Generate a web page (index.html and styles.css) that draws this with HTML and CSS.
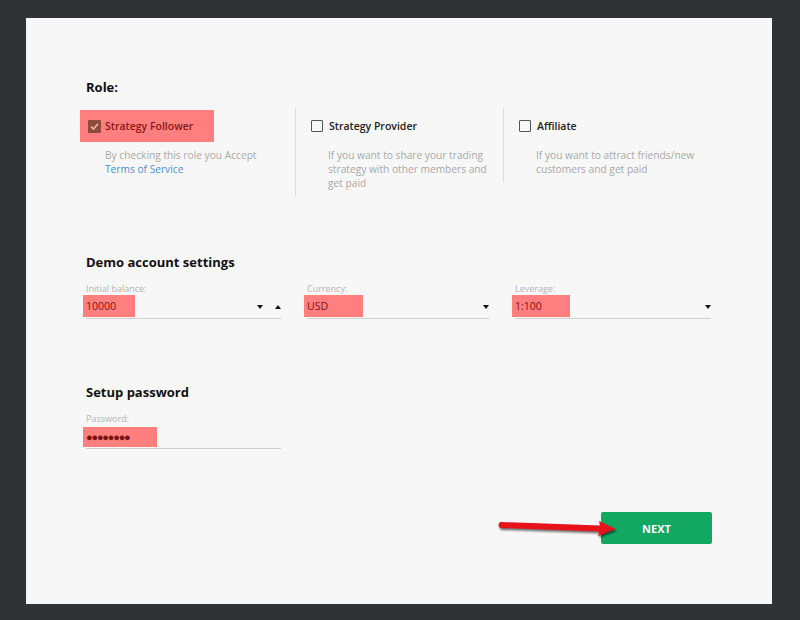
FILE: index.html
```html
<!DOCTYPE html>
<html>
    <head>
        <title>Account Setup</title>
        <link rel="stylesheet" href="styles.css">
    </head>
    <body>
        <div class="card">
            <section class="role-section">
                <h2>Role:</h2>
                <div class="roles">
                    <div class="role-col">
                        <div class="role-option marked">
                            <span class="checkbox checked">
                                <svg width="13" height="13" viewBox="0 0 13 13"><path d="M3 6.5 L5.5 9 L10 3.8" fill="none" stroke="#f6b3aa" stroke-width="1.6"/></svg>
                            </span>
                            <span class="role-name">Strategy Follower</span>
                        </div>
                        <p class="role-desc">By checking this role you Accept<br><a href="#">Terms of Service</a></p>
                    </div>
                    <div class="role-col divided">
                        <div class="role-option">
                            <span class="checkbox"></span>
                            <span class="role-name">Strategy Provider</span>
                        </div>
                        <p class="role-desc">If you want to share your trading<br>strategy with other members and<br>get paid</p>
                    </div>
                    <div class="role-col divided">
                        <div class="role-option">
                            <span class="checkbox"></span>
                            <span class="role-name">Affiliate</span>
                        </div>
                        <p class="role-desc">If you want to attract friends/new<br>customers and get paid</p>
                    </div>
                </div>
            </section>

            <section class="demo-section">
                <h2>Demo account settings</h2>
                <div class="fields">
                    <div class="field">
                        <label>Initial balance:</label>
                        <div class="field-box">
                            <span class="value marked w-balance">10000</span>
                            <span class="arrows"><i class="down"></i><i class="up"></i></span>
                        </div>
                    </div>
                    <div class="field">
                        <label>Currency:</label>
                        <div class="field-box">
                            <span class="value marked w-currency">USD</span>
                            <span class="arrows"><i class="down"></i></span>
                        </div>
                    </div>
                    <div class="field">
                        <label>Leverage:</label>
                        <div class="field-box">
                            <span class="value marked w-leverage">1:100</span>
                            <span class="arrows"><i class="down"></i></span>
                        </div>
                    </div>
                </div>
            </section>

            <section class="password-section">
                <h2>Setup password</h2>
                <div class="field password-field">
                    <label>Password:</label>
                    <div class="field-box">
                        <span class="value marked w-password dots">&#9679;&#9679;&#9679;&#9679;&#9679;&#9679;&#9679;&#9679;</span>
                    </div>
                </div>
            </section>

            <div class="actions">
                <button class="next-btn">NEXT</button>
                <svg class="pointer" width="130" height="30" viewBox="0 0 130 30">
                    <path d="M4 7 L104 10.5 L103 6 L120 14 L102 21 L103 16.5 L4 13 Q1 10 4 7 Z" fill="#e8121a"/>
                </svg>
            </div>
        </div>
    </body>
</html>
```

FILE: styles.css
```css
html, body {
    margin: 0;
    background-color: #2f3336;
}
body {
    padding: 18px 26px;
    height: 620px;
    box-sizing: border-box;
    font-family: "Open Sans", "Noto Sans", sans-serif;
}
.card {
    position: relative;
    width: 746px;
    height: 586px;
    box-sizing: border-box;
    background-color: #f7f7f7;
    padding: 60px 60px 0 60px;
}
h2 {
    margin: 0;
    font-size: 13px;
    line-height: 18px;
    font-weight: bold;
    color: #111;
}

/* roles */
.roles {
    display: grid;
    grid-template-columns: 215px 208px 1fr;
    align-items: start;
    margin: 12px 0 0 -6px;
}
.role-col {
    padding-bottom: 7px;
}
.role-col.divided {
    border-left: 1px solid #ddd;
    padding-left: 7px;
}
.role-option {
    display: flex;
    align-items: center;
    height: 32px;
    margin-top: 2px;
    padding: 0 8px;
    font-size: 10.5px;
    font-weight: 600;
    color: #222;
}
.role-option.marked {
    width: 118px;
    background-color: #ff7f7f;
    color: #8a1717;
}
.checkbox {
    display: inline-block;
    width: 10px;
    height: 10px;
    border: 1px solid #555;
    border-radius: 1px;
    margin-right: 6px;
    flex-shrink: 0;
}
.checkbox.checked {
    width: 13px;
    height: 13px;
    border: none;
    margin-right: 4px;
    background-color: #8f4a3e;
}
.checkbox svg {
    display: block;
}
.role-desc {
    margin: 6px 0 0 0;
    padding-left: 25px;
    font-size: 10.2px;
    line-height: 14px;
    color: #a8a8a8;
}
.role-desc a {
    color: #4a8fd8;
    text-decoration: none;
}

/* demo fields */
.demo-section {
    margin-top: 56px;
}
.fields {
    display: grid;
    grid-template-columns: 195px 182px 196px;
    column-gap: 26px;
    margin-top: 12px;
}
.field label {
    display: block;
    font-size: 9px;
    line-height: 12px;
    color: #b5b5b5;
}
.field-box {
    display: flex;
    align-items: center;
    justify-content: space-between;
    height: 23px;
    border-bottom: 1px solid #d0d0d0;
}
.value {
    height: 22px;
    line-height: 22px;
    margin-left: -3px;
    padding: 0 3px;
    font-size: 10.5px;
    color: #222;
    align-self: flex-start;
    box-sizing: border-box;
}
.value.marked {
    background-color: #ff7f7f;
    color: #7a1313;
}
.w-balance { width: 52px; }
.w-currency { width: 59px; }
.w-leverage { width: 58px; }
.w-password {
    width: 74px;
    height: 20px;
    line-height: 20px;
    margin-top: 2px;
}
.dots {
    font-size: 11px;
    letter-spacing: -1.2px;
    color: #6e0d0d;
}
.arrows {
    display: flex;
    align-items: center;
    gap: 12px;
}
.arrows i {
    display: block;
    width: 0;
    height: 0;
    border-left: 3.5px solid transparent;
    border-right: 3.5px solid transparent;
}
.arrows .down {
    border-top: 4px solid #111;
}
.arrows .up {
    border-bottom: 4px solid #111;
}

/* password */
.password-section {
    margin-top: 64px;
}
.password-field {
    width: 195px;
    margin-top: 12px;
}

/* actions */
.actions {
    position: relative;
    display: flex;
    justify-content: flex-end;
    margin-top: 63px;
}
.next-btn {
    width: 111px;
    height: 32px;
    border: none;
    border-radius: 2px;
    background-color: #13a862;
    color: #fff;
    font-family: "Open Sans", "Noto Sans", sans-serif;
    font-size: 11px;
    font-weight: bold;
}
.pointer {
    position: absolute;
    left: 410px;
    top: 3px;
    filter: drop-shadow(1px 2px 1px rgba(0, 0, 0, 0.55));
}
```
